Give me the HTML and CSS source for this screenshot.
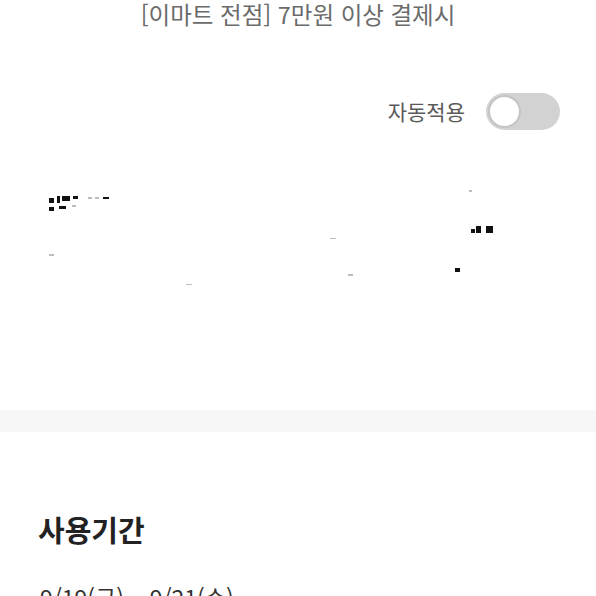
FILE: index.html
```html
<!DOCTYPE html>
<html lang="ko">
<head>
<meta charset="utf-8">
<link rel="stylesheet" href="styles.css">
</head>
<body>
<div class="page">
  <p class="condition">[이마트 전점] 7만원 이상 결제시</p>
  <div class="auto-row">
    <span class="auto-label">자동적용</span>
    <span class="toggle"><span class="knob"></span></span>
  </div>
  <div class="image-area">
    <span class="mark" style="left:49px;top:198px;width:5px;height:5px"></span>
    <span class="mark" style="left:57px;top:196px;width:3px;height:7px"></span>
    <span class="mark" style="left:62px;top:196px;width:8px;height:5px"></span>
    <span class="mark" style="left:73px;top:196px;width:5px;height:3px"></span>
    <span class="mark faint" style="left:88px;top:197px;width:4px;height:2px"></span>
    <span class="mark faint" style="left:95px;top:197px;width:4px;height:2px"></span>
    <span class="mark" style="left:103px;top:197px;width:6px;height:2px"></span>
    <span class="mark" style="left:49px;top:207px;width:5px;height:4px"></span>
    <span class="mark" style="left:59px;top:206px;width:7px;height:3px"></span>
    <span class="mark faint" style="left:72px;top:205px;width:4px;height:2px"></span>
    <span class="mark" style="left:471px;top:229px;width:4px;height:4px"></span>
    <span class="mark" style="left:476px;top:226px;width:5px;height:7px"></span>
    <span class="mark" style="left:486px;top:226px;width:7px;height:7px"></span>
    <span class="mark" style="left:455px;top:268px;width:5px;height:4px"></span>
    <span class="mark faint" style="left:469px;top:190px;width:3px;height:2px"></span>
    <span class="mark faint" style="left:49px;top:254px;width:5px;height:2px"></span>
    <span class="mark faint" style="left:330px;top:238px;width:6px;height:1px"></span>
    <span class="mark faint" style="left:348px;top:274px;width:5px;height:2px"></span>
    <span class="mark faint" style="left:186px;top:284px;width:6px;height:1px"></span>
  </div>
  <div class="divider"></div>
  <section class="period">
    <h2 class="period-title">사용기간</h2>
    <p class="period-date">9/19(금) ~ 9/21(수)</p>
  </section>
</div>
</body>
</html>
```
FILE: styles.css
```css
html, body {
  margin: 0;
  padding: 0;
  background: #ffffff;
}
body {
  font-family: "Noto Sans CJK KR", "Noto Sans", sans-serif;
  overflow: hidden;
}
.page {
  width: 596px;
  height: 596px;
  position: relative;
  overflow: hidden;
}
.condition {
  margin: 0;
  height: 28px;
  line-height: 28px;
  font-size: 23.5px;
  color: #6b6b6b;
  text-align: center;
}
.auto-row {
  display: flex;
  justify-content: flex-end;
  align-items: center;
  gap: 21px;
  padding-right: 36px;
  margin-top: 65px;
  height: 37px;
}
.auto-label {
  font-size: 21px;
  color: #5a5a5a;
  line-height: 37px;
}
.toggle {
  display: flex;
  align-items: center;
  width: 74px;
  height: 37px;
  border-radius: 19px;
  background: #d2d2d2;
  padding-left: 2px;
  box-sizing: border-box;
}
.knob {
  width: 33px;
  height: 33px;
  border-radius: 50%;
  background: #ffffff;
  border: 2px solid #c4c4c4;
  box-sizing: border-box;
}
.image-area {
  height: 280px;
}
.mark {
  position: absolute;
  background: #111111;
}
.mark.faint {
  background: #bdbdbd;
}
.divider {
  height: 22px;
  background: #f7f7f7;
}
.period {
  padding: 0 38px;
}
.period-title {
  margin: 78px 0 0;
  font-size: 29px;
  font-weight: 700;
  color: #222222;
  line-height: 38px;
}
.period-date {
  margin: 34px 0 0 2px;
  font-size: 23px;
  color: #333333;
  line-height: 30px;
}
```
